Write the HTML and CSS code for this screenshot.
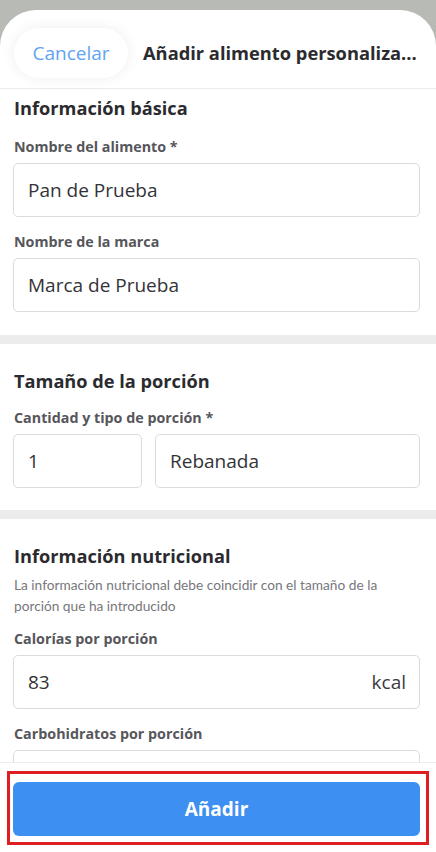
FILE: index.html
```html
<!DOCTYPE html>
<html lang="es">
<head>
<meta charset="utf-8">
<link rel="stylesheet" href="styles.css">
</head>
<body>
<div class="sheet">
  <header class="topbar">
    <button class="cancel">Cancelar</button>
    <h1 class="title">Añadir alimento personaliza...</h1>
  </header>
  <main class="content">
    <section class="section first">
      <h2 class="heading">Información básica</h2>
      <label class="label gap-l">Nombre del alimento *</label>
      <div class="field">Pan de Prueba</div>
      <label class="label gap-m">Nombre de la marca</label>
      <div class="field">Marca de Prueba</div>
    </section>
    <div class="band"></div>
    <section class="section">
      <h2 class="heading">Tamaño de la porción</h2>
      <label class="label gap-s">Cantidad y tipo de porción *</label>
      <div class="row">
        <div class="field qty">1</div>
        <div class="field unit">Rebanada</div>
      </div>
    </section>
    <div class="band"></div>
    <section class="section">
      <h2 class="heading">Información nutricional</h2>
      <p class="desc">La información nutricional debe coincidir con el tamaño de la porción que ha introducido</p>
      <label class="label gap-d">Calorías por porción</label>
      <div class="field split"><span>83</span><span class="suffix">kcal</span></div>
      <label class="label gap-m">Carbohidratos por porción</label>
      <div class="field"></div>
    </section>
  </main>
  <footer class="footer">
    <div class="btn-wrap">
      <button class="add">Añadir</button>
      <div class="highlight"></div>
    </div>
  </footer>
</div>
</body>
</html>
```

FILE: styles.css
```css
* { box-sizing: border-box; }
html, body { margin: 0; padding: 0; }
body {
  width: 436px;
  height: 852px;
  overflow: hidden;
  background: #b8bab6;
  font-family: "Open Sans", "Noto Sans", sans-serif;
  color: #2c2c30;
}
.sheet {
  margin-top: 10px;
  height: 842px;
  background: #fff;
  border-radius: 36px 36px 0 0;
  display: flex;
  flex-direction: column;
  overflow: hidden;
}
.topbar {
  height: 79px;
  flex: none;
  display: flex;
  align-items: flex-start;
  padding: 18px 0 0 14px;
  border-bottom: 1px solid #ebebeb;
}
.cancel {
  width: 114px;
  height: 50px;
  border: none;
  border-radius: 25px;
  background: #fff;
  box-shadow: 0 0 14px rgba(0,0,0,0.07);
  color: #5fa3f3;
  font-family: inherit;
  font-size: 19px;
  padding: 0;
}
.title {
  margin: 0 0 0 15px;
  font-size: 18.3px;
  font-weight: 700;
  line-height: 50px;
  color: #2b2b2f;
  white-space: nowrap;
}
.content {
  flex: 1;
  overflow: hidden;
}
.section {
  padding: 26px 16px 22px 13px;
  display: flex;
  flex-direction: column;
}
.section.first { padding-top: 8px; padding-bottom: 23px; }
.heading {
  margin: 0 0 0 1px;
  font-size: 18.2px;
  font-weight: 700;
  line-height: 22px;
  color: #2b2b2f;
}
.label {
  display: block;
  margin-left: 1px;
  font-size: 14.3px;
  font-weight: 700;
  line-height: 16px;
  color: #56565b;
  margin-bottom: 8px;
}
.gap-l { margin-top: 20px; }
.gap-m { margin-top: 17px; }
.gap-s { margin-top: 18px; }
.gap-d { margin-top: 15px; }
.desc {
  margin: 7px 0 0 1px;
  font-family: Lato, "Open Sans", sans-serif;
  font-size: 13.7px;
  line-height: 21px;
  color: #77777c;
}
.field {
  height: 54px;
  border: 1px solid #dadbe0;
  border-radius: 5px;
  padding: 0 14px;
  display: flex;
  align-items: center;
  font-size: 19px;
  color: #333337;
}
.split { justify-content: space-between; padding-right: 13px; }
.suffix { color: #3a3a3e; }
.row {
  display: flex;
  gap: 13px;
}
.qty { width: 129px; flex: none; }
.unit { flex: 1; }
.band {
  height: 9px;
  background: #ececec;
}
.footer {
  flex: none;
  height: 90px;
  border-top: 1px solid #ececf0;
  padding: 19px 16px 0 13px;
  background: #fff;
}
.btn-wrap { position: relative; }
.add {
  width: 100%;
  height: 54px;
  border: none;
  border-radius: 6px;
  background: #3d8ff1;
  color: #fff;
  font-family: inherit;
  font-size: 19px;
  font-weight: 700;
}
.highlight {
  position: absolute;
  left: -6px;
  top: -11px;
  right: -9px;
  bottom: -9px;
  border: 3px solid #e11d24;
  pointer-events: none;
}
```
